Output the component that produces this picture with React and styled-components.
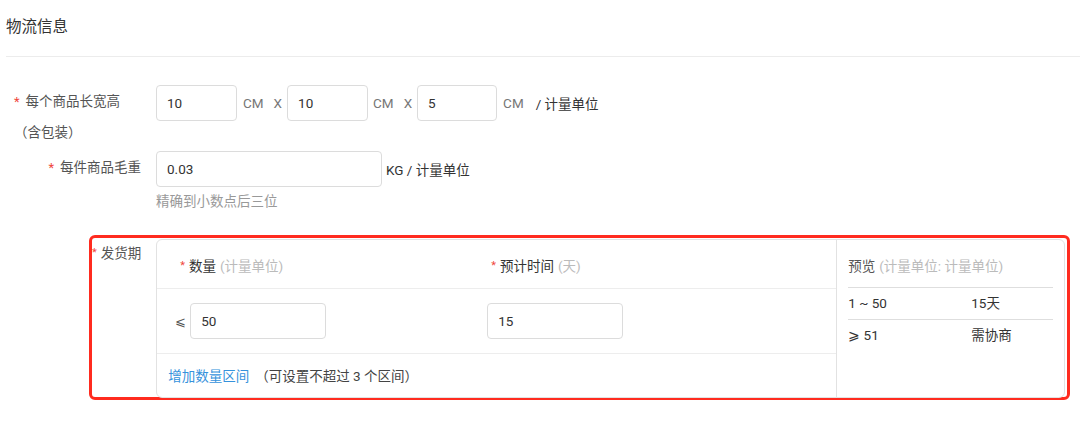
import React from 'react';
import styled, { createGlobalStyle } from 'styled-components';

const GlobalStyle = createGlobalStyle`
  body {
    margin: 0;
    background: #fff;
    color: #333;
    font-family: Roboto, "Noto Sans CJK SC", "Liberation Sans", sans-serif;
    font-size: 13.5px;
  }
  * { box-sizing: border-box; }
`;

const Header = styled.div`
  margin-left: 6px;
  height: 57px;
  border-bottom: 1px solid #ececec;
`;

const Title = styled.h3`
  margin: 0;
  font-size: 15.5px;
  font-weight: normal;
  line-height: 55px;
  color: #333;
`;

const Form = styled.div`
  padding-top: 28px;
`;

const Row = styled.div`
  display: flex;
  align-items: flex-start;
  margin-top: ${(p) => p.gap || 0}px;
`;

const Label = styled.div`
  flex: 0 0 141px;
  margin-right: 15px;
  padding-top: 1px;
  line-height: 30px;
  color: #555;
  text-align: ${(p) => (p.left ? 'left' : 'right')};
  padding-left: ${(p) => (p.left ? '14px' : '0')};
  white-space: nowrap;
`;

const Star = styled.span`
  color: #f0463c;
  font-size: ${(p) => (p.small ? '11px' : '13px')};
  margin-right: ${(p) => (p.small ? 4 : 6)}px;
  vertical-align: ${(p) => (p.small ? '2px' : '0')};
`;

const Field = styled.div`
  display: flex;
  flex-direction: column;
`;

const Line = styled.div`
  display: flex;
  align-items: center;
`;

const Input = styled.input`
  width: ${(p) => p.w}px;
  height: 36px;
  padding: 0 10px;
  border: 1px solid #dcdcdc;
  border-radius: 4px;
  font: inherit;
  color: #333;
  outline: none;
  background: #fff;
`;

const Unit = styled.span`
  color: ${(p) => (p.dark ? '#333' : '#777')};
  margin: 0 ${(p) => p.r ?? 6}px 0 ${(p) => p.l ?? 6}px;
  white-space: nowrap;
`;

const Hint = styled.div`
  margin-top: 4px;
  line-height: 20px;
  color: #999;
`;

const Marked = styled.div`
  display: flex;
  align-items: flex-start;
  margin: 24px 10px 0 89px;
  border: 3px solid #ff2b1f;
  border-radius: 6px;
`;

const MarkedLabel = styled(Label)`
  flex: 0 0 49px;
  padding-top: 0;
`;

const Table = styled.div`
  flex: 1;
  display: flex;
  height: 159px;
  margin-top: 1px;
  margin-bottom: -1px;
  margin-right: 2px;
  border: 1px solid #e2e2e2;
  border-radius: 6px;
`;

const Main = styled.div`
  flex: 0 0 680px;
  border-right: 1px solid #e2e2e2;
`;

const GridRow = styled.div`
  display: grid;
  grid-template-columns: 310px 1fr;
  align-items: center;
  height: ${(p) => p.h}px;
  border-bottom: 1px solid #ededed;
`;

const HeadCell = styled.div`
  align-self: start;
  padding: 16px 0 0 ${(p) => p.pl}px;
  line-height: 20px;
  color: #333;
`;

const Muted = styled.span`
  color: #bbb;
  margin-left: 4px;
`;

const Cell = styled.div`
  display: flex;
  align-items: center;
  padding-left: ${(p) => p.pl}px;
`;

const Sign = styled.span`
  color: #555;
  margin-right: 4px;
  font-size: 13px;
`;

const Footer = styled.div`
  display: flex;
  align-items: center;
  height: 42px;
  padding-left: 11px;
  color: #444;
`;

const Link = styled.a`
  color: #3592dc;
  text-decoration: none;
  margin-right: 6px;
  cursor: pointer;
`;

const Preview = styled.div`
  flex: 1;
  padding: 0 11px;
`;

const PreviewHead = styled.div`
  height: 48px;
  padding-top: 16px;
  line-height: 20px;
  color: #555;
  border-bottom: 1px solid #dedede;
`;

const PreviewRow = styled.div`
  display: grid;
  grid-template-columns: 123px 1fr;
  height: 32px;
  padding-top: 5px;
  line-height: 20px;
  color: #333;
  border-bottom: ${(p) => (p.last ? 'none' : '1px solid #dedede')};
`;

const preview = [
  { range: '1 ~ 50', time: '15天' },
  { range: '⩾ 51', time: '需协商' },
];

export default function App() {
  return (
    <>
      <GlobalStyle />
      <Header>
        <Title>物流信息</Title>
      </Header>
      <Form>
        <Row>
          <Label left>
            <Star>*</Star>每个商品长宽高
            <br />
            （含包装）
          </Label>
          <Line>
            <Input w={81} defaultValue="10" />
            <Unit r={10}>CM</Unit>
            <Unit l={0} r={5}>X</Unit>
            <Input w={81} defaultValue="10" />
            <Unit l={5} r={10}>CM</Unit>
            <Unit l={0} r={5}>X</Unit>
            <Input w={80} defaultValue="5" />
            <Unit r={12}>CM</Unit>
            <Unit dark l={0}>/ 计量单位</Unit>
          </Line>
        </Row>
        <Row gap={4}>
          <Label>
            <Star>*</Star>每件商品毛重
          </Label>
          <Field>
            <Line>
              <Input w={226} defaultValue="0.03" />
              <Unit dark l={4}>KG / 计量单位</Unit>
            </Line>
            <Hint>精确到小数点后三位</Hint>
          </Field>
        </Row>
        <Marked>
          <MarkedLabel>
            <Star small>*</Star>发货期
          </MarkedLabel>
          <Table>
            <Main>
              <GridRow h={49}>
                <HeadCell pl={23}>
                  <Star small>*</Star>数量<Muted>(计量单位)</Muted>
                </HeadCell>
                <HeadCell pl={24}>
                  <Star small>*</Star>预计时间<Muted>(天)</Muted>
                </HeadCell>
              </GridRow>
              <GridRow h={65}>
                <Cell pl={18}>
                  <Sign>⩽</Sign>
                  <Input w={136} defaultValue="50" />
                </Cell>
                <Cell pl={20}>
                  <Input w={136} defaultValue="15" />
                </Cell>
              </GridRow>
              <Footer>
                <Link>增加数量区间</Link>
                （可设置不超过 3 个区间）
              </Footer>
            </Main>
            <Preview>
              <PreviewHead>
                预览<Muted>(计量单位: 计量单位)</Muted>
              </PreviewHead>
              {preview.map((r, i) => (
                <PreviewRow key={r.range} last={i === preview.length - 1}>
                  <span>{r.range}</span>
                  <span>{r.time}</span>
                </PreviewRow>
              ))}
            </Preview>
          </Table>
        </Marked>
      </Form>
    </>
  );
}
